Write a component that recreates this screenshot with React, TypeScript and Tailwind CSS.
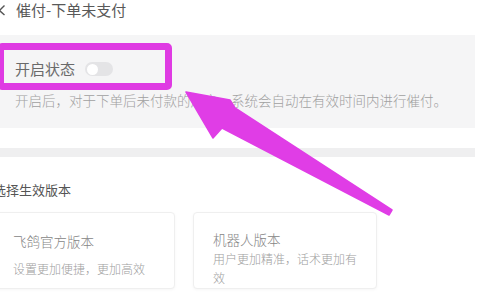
import React from "react";

export default function App() {
  const font = { fontFamily: '"Noto Sans CJK SC", "Noto Sans", sans-serif' };
  return (
    <div
      className="relative w-[482px] h-[293px] overflow-hidden bg-white"
      style={font}
    >
      {/* Header */}
      <div className="h-[35px] flex items-start pt-[1px]">
        <svg width="8" height="16" viewBox="0 0 8 16" className="mt-[1px] ml-[-2px]">
          <path d="M6.5 3.5 L1.5 8.5 L6.5 13" fill="none" stroke="#555" strokeWidth="1.4" />
        </svg>
        <span className="ml-[10px] text-[15px] leading-[18px] text-[#595959]">催付-下单未支付</span>
      </div>

      {/* Settings panel */}
      <div className="w-[475px] h-[93px] bg-[#f5f5f6] pl-[15px] pt-[24px]">
        <div className="flex items-center h-[20px]">
          <span className="text-[15px] leading-[20px] text-[#6a6a6a]">开启状态</span>
          <div className="ml-[10px] w-[28px] h-[14px] rounded-full bg-[#e4e4e6] flex items-center pl-[2px]">
            <div className="w-[11px] h-[11px] rounded-full bg-white" />
          </div>
        </div>
        <div className="mt-[12px] text-[13.5px] leading-[18px] font-light text-[#a0a0a0] whitespace-nowrap">
          开启后，对于下单后未付款的用户，系统会自动在有效时间内进行催付。
        </div>
      </div>

      <div className="h-[20px]" />
      <div className="w-[475px] h-[9px] bg-[#efeff0]" />

      {/* Version section */}
      <div className="mt-[23px] ml-[-7px] text-[13px] leading-[20px] text-[#555]">选择生效版本</div>
      <div className="mt-[12px] ml-[-9px] flex gap-[18px]">
        <div className="w-[184px] h-[77px] rounded-[4px] border border-[#efefef] bg-white pl-[21px] pt-[19px] shadow-[0_1px_3px_rgba(0,0,0,0.04)]">
          <div className="text-[13.5px] leading-[18px] font-light text-[#858585]">飞鸽官方版本</div>
          <div className="mt-[10px] text-[12px] leading-[18px] font-light text-[#a0a0a0]">设置更加便捷，更加高效</div>
        </div>
        <div className="w-[184px] h-[77px] rounded-[4px] border border-[#efefef] bg-white px-[19px] pt-[17px] shadow-[0_1px_3px_rgba(0,0,0,0.04)]">
          <div className="text-[13.5px] leading-[18px] font-light text-[#858585]">机器人版本</div>
          <div className="mt-[1px] text-[12px] leading-[19px] font-light text-[#a0a0a0]">用户更加精准，话术更加有效</div>
        </div>
      </div>

      {/* Magenta annotation box */}
      <div className="absolute left-[-3px] top-[43px] w-[175px] h-[47px] border-[7px] border-[#df3be3] rounded-[5px]" />

      {/* Magenta arrow */}
      <svg className="absolute left-0 top-0" width="482" height="293" viewBox="0 0 482 293">
        <polygon
          points="186,92 230,100 235,108 392,210 389,215 222,128 213,138"
          fill="#e03de6"
          stroke="#e03de6"
          strokeWidth="1.5"
          strokeLinejoin="round"
        />
      </svg>
    </div>
  );
}
